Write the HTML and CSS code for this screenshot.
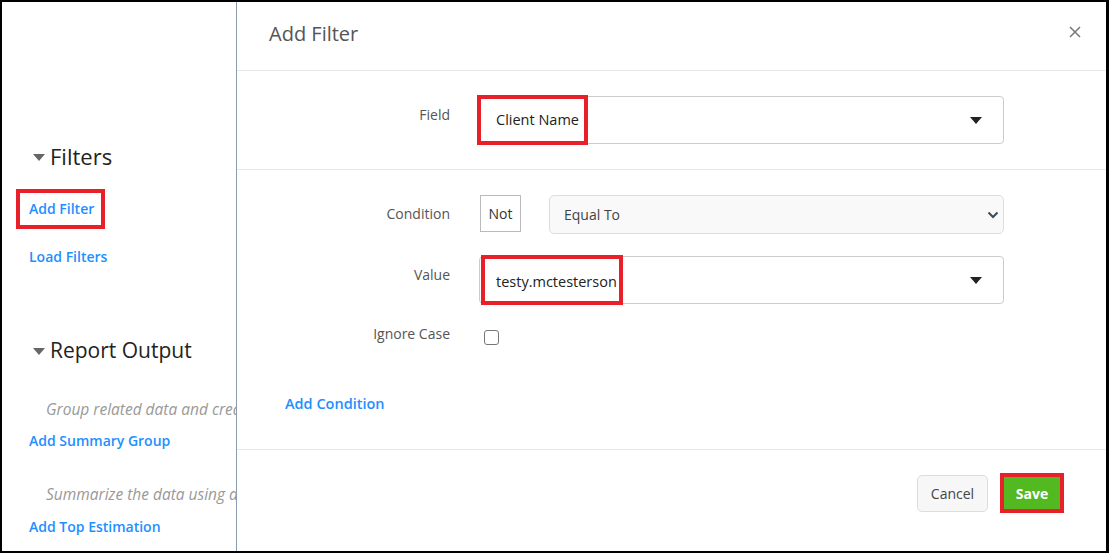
FILE: index.html
```html
<!DOCTYPE html>
<html lang="en">
<head>
  <meta charset="UTF-8">
  <meta name="viewport" content="width=device-width, initial-scale=1.0">
  <title>Add Filter</title>
  <link rel="stylesheet" href="styles.css">
</head>
<body>
  <div class="frame">
    <div class="sidebar">
      <h3 class="section-title"><span class="caret"></span>Filters</h3>
      <div class="links">
        <a class="link mark" href="#">Add Filter</a>
        <a class="link" href="#">Load Filters</a>
      </div>
      <h3 class="section-title output"><span class="caret"></span>Report Output</h3>
      <p class="hint">Group related data and create summary rows</p>
      <a class="link" href="#">Add Summary Group</a>
      <p class="hint second">Summarize the data using an estimation</p>
      <a class="link" href="#">Add Top Estimation</a>
    </div>

    <div class="modal">
      <div class="modal-header">
        <h4 class="modal-title">Add Filter</h4>
        <svg class="close" width="12" height="12" viewBox="0 0 12 12"><path d="M1 1 L11 11 M11 1 L1 11" stroke="#777" stroke-width="1.5"/></svg>
      </div>

      <div class="modal-section field-section">
        <div class="row">
          <label class="row-label">Field</label>
          <div class="control">
            <div class="combo">
              <span class="combo-text mark">Client Name</span>
              <span class="combo-arrow"></span>
            </div>
          </div>
        </div>
      </div>

      <div class="modal-section condition-section">
        <div class="row">
          <label class="row-label">Condition</label>
          <div class="control inline">
            <span class="not-box">Not</span>
            <div class="select">
              <span>Equal To</span>
              <svg class="chevron" width="12" height="8" viewBox="0 0 12 8"><path d="M1.5 1.5 L6 6 L10.5 1.5" fill="none" stroke="#3d4a57" stroke-width="2"/></svg>
            </div>
          </div>
        </div>
        <div class="row">
          <label class="row-label">Value</label>
          <div class="control">
            <div class="combo">
              <span class="combo-text mark">testy.mctesterson</span>
              <span class="combo-arrow"></span>
            </div>
          </div>
        </div>
        <div class="row check-row">
          <label class="row-label">Ignore Case</label>
          <div class="control">
            <span class="checkbox"></span>
          </div>
        </div>
        <a class="link add-condition" href="#">Add Condition</a>
      </div>

      <div class="modal-footer">
        <button class="btn cancel">Cancel</button>
        <span class="mark save-mark"><button class="btn save">Save</button></span>
      </div>
    </div>
  </div>
</body>
</html>
```

FILE: styles.css
```css
body {
  margin: 0;
  padding: 0;
  font-family: "Open Sans", "Noto Sans", Arial, sans-serif;
  background-color: #fff;
}
.frame {
  display: flex;
  height: 553px;
  box-sizing: border-box;
  border: 2px solid #000;
  border-right-width: 3px;
  overflow: hidden;
}
.sidebar {
  width: 234px;
  flex-shrink: 0;
  overflow: hidden;
  white-space: nowrap;
  padding: 0 0 0 27px;
  box-sizing: border-box;
}
.section-title {
  margin: 137px 0 0 4px;
  font-size: 22px;
  font-weight: normal;
  color: #222;
  line-height: 34px;
  display: flex;
  align-items: center;
}
.section-title.output {
  margin-top: 66px;
  font-size: 21px;
}
.caret {
  width: 0;
  height: 0;
  border-left: 6px solid transparent;
  border-right: 6px solid transparent;
  border-top: 7px solid #666;
  margin-right: 5px;
  margin-top: 2px;
}
.links {
  margin-top: 16px;
}
.link {
  display: block;
  color: #1e8fff;
  font-size: 14px;
  font-weight: 600;
  text-decoration: none;
  line-height: 20px;
}
.links .link {
  margin-bottom: 28px;
}
.links .link.mark {
  display: inline-block;
  margin: 0 0 18px -13px;
  padding: 6px 7px 6px 9px;
}
.mark {
  border: 4px solid #e8202a;
}
.hint {
  margin: 32px 0 12px 17px;
  font-size: 15.5px;
  font-style: italic;
  color: #999;
  line-height: 20px;
}
.hint.second {
  margin: 33px 0 13px 17px;
}

.modal {
  flex: 1;
  border-left: 1px solid #8c9cb0;
  display: flex;
  flex-direction: column;
}
.modal-header {
  height: 68px;
  border-bottom: 1px solid #e8e8e8;
  display: flex;
  align-items: center;
  justify-content: space-between;
  padding: 0 25px 0 32px;
}
.modal-title {
  margin: 0 0 6px 0;
  font-size: 20px;
  font-weight: normal;
  color: #555;
}
.close {
  margin-bottom: 8px;
}
.modal-section {
  border-bottom: 1px solid #e8e8e8;
}
.field-section {
  padding: 25px 0 25px;
}
.condition-section {
  padding: 25px 0 35px;
}
.row {
  display: flex;
  align-items: flex-start;
  margin-bottom: 22px;
}
.field-section .row {
  margin-bottom: 0;
}
.row-label {
  width: 213px;
  text-align: right;
  font-size: 14px;
  color: #555;
  padding-top: 9px;
  line-height: 20px;
}
.control {
  margin-left: 29px;
  width: 525px;
}
.control.inline {
  display: flex;
  gap: 28px;
}
.combo {
  height: 48px;
  box-sizing: border-box;
  border: 1px solid #ccc;
  border-radius: 4px;
  display: flex;
  align-items: center;
  justify-content: space-between;
  padding-right: 21px;
}
.combo-text {
  height: 50px;
  box-sizing: border-box;
  display: flex;
  align-items: center;
  padding: 0 5px 2px 14px;
  margin-left: -3px;
  font-size: 14.5px;
  color: #222;
}
.field-section .combo-text {
  padding-left: 15px;
}
.condition-section .combo-text {
  margin-left: 1px;
  padding: 2px 2px 0 11px;
}
.combo-arrow {
  width: 0;
  height: 0;
  border-left: 6px solid transparent;
  border-right: 6px solid transparent;
  border-top: 7px solid #222;
}
.not-box {
  width: 41px;
  height: 37px;
  box-sizing: border-box;
  border: 1px solid #bbb;
  display: flex;
  align-items: center;
  justify-content: center;
  font-size: 14px;
  color: #333;
  background: #fff;
  margin-left: 1px;
}
.select {
  flex: 1;
  height: 39px;
  box-sizing: border-box;
  border: 1px solid #ddd;
  border-radius: 5px;
  background: #f9f9f9;
  display: flex;
  align-items: center;
  justify-content: space-between;
  padding: 0 4px 0 14px;
  font-size: 14px;
  color: #444;
}
.check-row .row-label {
  padding-top: 0;
  margin-top: -2px;
}
.checkbox {
  display: block;
  width: 13px;
  height: 13px;
  border: 1px solid #777;
  border-radius: 3px;
  margin: 4px 0 0 5px;
}
.add-condition {
  display: inline-block;
  margin: 27px 0 0 48px;
  font-size: 14.5px;
}
.modal-footer {
  display: flex;
  justify-content: flex-end;
  align-items: center;
  gap: 12px;
  padding: 23px 42px 0 0;
}
.btn {
  font-family: "Open Sans", "Noto Sans", Arial, sans-serif;
  font-size: 14px;
  cursor: pointer;
  border-radius: 5px;
}
.cancel {
  height: 37px;
  width: 71px;
  background: #f7f7f7;
  border: 1px solid #ddd;
  color: #444;
}
.save-mark {
  display: inline-block;
  line-height: 0;
}
.save {
  height: 32px;
  width: 56px;
  background: #52b920;
  color: #fff;
  font-weight: 700;
  border: none;
  border-radius: 0;
}
```
